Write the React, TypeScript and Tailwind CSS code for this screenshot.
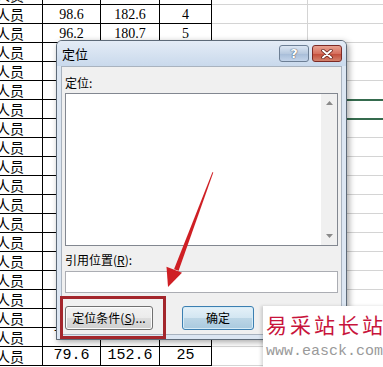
import React from 'react';

type Row = { b: string; c: string; d: string; wide?: boolean };

const rows: Row[] = [
  { b: '102.4', c: '180.4', d: '2' },
  { b: '98.6', c: '182.6', d: '4' },
  { b: '96.2', c: '180.7', d: '5' },
  { b: '95.1', c: '179.2', d: '6' },
  { b: '93.4', c: '176.5', d: '7' },
  { b: '92.8', c: '174.9', d: '8' },
  { b: '91.0', c: '172.3', d: '9' },
  { b: '89.7', c: '170.1', d: '10' },
  { b: '88.5', c: '168.8', d: '11' },
  { b: '87.2', c: '166.4', d: '12' },
  { b: '86.0', c: '164.7', d: '13' },
  { b: '85.3', c: '162.9', d: '14' },
  { b: '84.1', c: '161.0', d: '15' },
  { b: '83.0', c: '159.6', d: '16' },
  { b: '82.2', c: '157.3', d: '17' },
  { b: '81.4', c: '155.8', d: '18' },
  { b: '80.6', c: '154.2', d: '19' },
  { b: '80.1', c: '153.4', d: '20' },
  { b: '79.8', c: '150.8', d: '21', wide: true },
  { b: '79.6', c: '152.6', d: '25', wide: true },
];

const num = "font-['Liberation_Serif',serif] text-[14px] text-black";
const numWide = "font-['Liberation_Mono',monospace] text-[15px] text-black";
const cjk = "font-['Noto_Sans_CJK_SC',sans-serif]";

function Sheet() {
  return (
    <div className="mt-[-14px]">
      {rows.map((r, i) => {
        const f = r.wide ? numWide : num;
        return (
          <div key={i} className="flex h-[19px]">
            <div className={`flex w-[43px] shrink-0 items-center justify-end overflow-hidden whitespace-nowrap border-b border-r border-black pr-[18px] text-[14px] leading-none text-black ${cjk}`}>
              管理人员
            </div>
            <div className={`flex w-[58px] shrink-0 items-center justify-center border-b border-r border-black ${f}`}>{r.b}</div>
            <div className={`flex w-[59px] shrink-0 items-center justify-center border-b border-r border-black ${f}`}>{r.c}</div>
            <div className={`flex w-[52px] shrink-0 items-center justify-center border-b border-r border-black ${f}`}>{r.d}</div>
            <div className="w-[96px] shrink-0 border-b border-r border-[#d4d4d4]" />
            <div className="flex-1 border-b border-[#d4d4d4]" />
          </div>
        );
      })}
    </div>
  );
}

function WinButton({ children, primary, className }: { children: React.ReactNode; primary?: boolean; className?: string }) {
  return (
    <div
      className={`flex h-[24px] items-center justify-center rounded-[3px] border text-[12px] text-black ${cjk} ${
        primary
          ? 'border-[#3c7fb1] bg-[linear-gradient(#e5f1f8_0%,#d3e6f2_50%,#bcd6e6_51%,#a9cadf_100%)] shadow-[inset_0_0_0_1px_#d6ecf7]'
          : 'border-[#707070] bg-[linear-gradient(#f2f2f2_0%,#ebebeb_50%,#dddddd_51%,#cfcfcf_100%)] shadow-[inset_0_0_0_1px_#fbfbfb]'
      } ${className ?? ''}`}
    >
      {children}
    </div>
  );
}

function Dialog() {
  return (
    <div className="absolute left-[56px] top-[40px] flex h-[300px] w-[291px] flex-col rounded-t-[6px] border border-[#5d6a78] bg-[#dce6f2] shadow-[2px_2px_6px_rgba(0,0,0,0.35)]">
      {/* title bar */}
      <div className="flex h-[25px] shrink-0 items-center rounded-t-[5px] bg-[linear-gradient(#e4ecf6,#c9d9ec)] pl-[5px] pr-[4px]">
        <span className={`text-[13px] text-black ${cjk}`}>定位</span>
        <div className="ml-auto flex gap-[3px]">
          <div className="flex h-[17px] w-[30px] items-center justify-center rounded-[3px] border border-[#6d7f95] bg-[linear-gradient(#dbe6f3,#b7c9df_50%,#a6bcd7_51%,#c3d4ea)]">
            <span className="font-['DejaVu_Sans',sans-serif] text-[13px] font-bold leading-none text-white [text-shadow:0_0_1px_#35445a,0_0_1px_#35445a]">?</span>
          </div>
          <div className="flex h-[17px] w-[30px] items-center justify-center rounded-[3px] border border-[#7c2a25] bg-[linear-gradient(#e8a291,#d6705e_50%,#c24a37_51%,#d3826d)]">
            <svg width="12" height="10" viewBox="0 0 12 10">
              <path d="M2 1.5 L10 8.5 M10 1.5 L2 8.5" stroke="#5a1a14" strokeWidth="3.4" strokeLinecap="round" />
              <path d="M2 1.5 L10 8.5 M10 1.5 L2 8.5" stroke="#ffffff" strokeWidth="2" strokeLinecap="round" />
            </svg>
          </div>
        </div>
      </div>
      {/* body */}
      <div className={`mx-[4px] mb-[4px] flex flex-1 flex-col border border-[#a9b3bf] bg-[#f0f0f0] px-[3px] text-[12px] text-black ${cjk}`}>
        <div className="mt-[8px] h-[16px] leading-[16px]">定位:</div>
        <div className="mt-[2px] flex h-[153px] border border-[#828790] bg-white">
          <div className="flex-1" />
          <div className="flex w-[16px] flex-col items-center justify-between bg-[#f0f0f0] py-[7px]">
            <svg width="7" height="4" viewBox="0 0 7 4"><path d="M0 4 L3.5 0 L7 4 Z" fill="#8a8a8a" /></svg>
            <svg width="7" height="4" viewBox="0 0 7 4"><path d="M0 0 L3.5 4 L7 0 Z" fill="#8a8a8a" /></svg>
          </div>
        </div>
        <div className="mt-[6px] h-[16px] leading-[16px]">
          引用位置(<span className="underline">R</span>):
        </div>
        <div className="mt-[3px] h-[22px] border border-[#abadb3] bg-white" />
        <div className="mt-[13px] flex">
          <WinButton className="w-[88px]">
            定位条件(<span className="underline">S</span>)...
          </WinButton>
          <WinButton primary className="ml-[29px] w-[72px]">确定</WinButton>
          <WinButton className="ml-[11px] w-[73px]">取消</WinButton>
        </div>
      </div>
    </div>
  );
}

export default function App() {
  return (
    <div className="relative h-[367px] w-[383px] overflow-hidden bg-white">
      <Sheet />
      {/* selected cell on the right */}
      <div className="absolute left-[340px] top-[99px] h-[21px] w-[50px] border-2 border-[#356b4e]" />
      <Dialog />
      {/* red highlight box */}
      <div className="absolute left-[60px] top-[296px] h-[43px] w-[106px] border-[3px] border-[#a3262c]" />
      {/* arrow */}
      <svg className="pointer-events-none absolute left-0 top-0" width="383" height="367" viewBox="0 0 383 367">
        <path d="M212.5 172 L213.3 172.6 L178.6 270.8 L174 269.2 Z" fill="#cf1f24" />
        <path d="M168 287 L166.5 266.8 L182 272.8 Z" fill="#cf1f24" />
      </svg>
      {/* watermark */}
      <div className="absolute left-[263px] top-[306px] flex h-[61px] w-[130px] flex-col bg-white pl-[3px] shadow-[-2px_0_3px_rgba(0,0,0,0.15)]">
        <div className={`mt-[4px] h-[28px] whitespace-nowrap text-[21px] leading-[28px] tracking-[3px] text-[#c8143c] ${cjk}`}>易采站长站</div>
        <div className="mt-[5px] whitespace-nowrap font-['Liberation_Mono',monospace] text-[15px] leading-[18px] text-[#9a9a9a]">www.easck.com</div>
      </div>
    </div>
  );
}
